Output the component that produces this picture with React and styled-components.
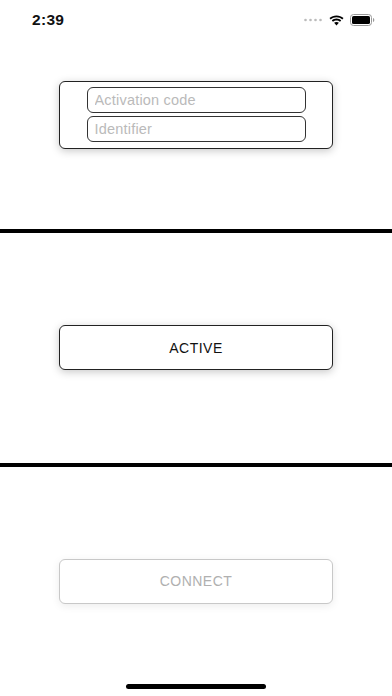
import React from 'react'
import { styled, createGlobalStyle } from 'styled-components'

const Global = createGlobalStyle`
  html, body {
    margin: 0;
    padding: 0;
    background: #fff;
    font-family: "Liberation Sans", Arial, sans-serif;
  }
  * { box-sizing: border-box; }
`

const Screen = styled.div`
  position: relative;
  width: 392px;
  height: 696px;
  display: flex;
  flex-direction: column;
  overflow: hidden;
  background: #fff;
`

const StatusBar = styled.div`
  position: absolute;
  top: 0;
  left: 0;
  right: 0;
  height: 40px;
  display: flex;
  align-items: center;
  justify-content: space-between;
  padding: 0 17px 0 32px;
`

const Time = styled.span`
  font-size: 15.5px;
  font-weight: 700;
  color: #111;
  letter-spacing: 0.3px;
`

const StatusIcons = styled.div`
  display: flex;
  align-items: center;
  gap: 6px;
`

const Section = styled.div`
  flex: 1;
  display: flex;
  align-items: center;
  justify-content: center;
`

const Divider = styled.div`
  height: 4px;
  background: #000;
  flex-shrink: 0;
`

const Card = styled.div`
  width: 274px;
  padding: 5px 0 6px;
  display: flex;
  flex-direction: column;
  align-items: center;
  gap: 3px;
  border: 1px solid #222;
  border-radius: 6px;
  background: #fff;
  box-shadow: 0 2px 8px rgba(0, 0, 0, 0.22);
`

const Field = styled.input`
  width: 219px;
  height: 26px;
  border: 1px solid #333;
  border-radius: 6px;
  padding: 0 7px;
  font-family: "Liberation Sans", Arial, sans-serif;
  font-size: 14.5px;
  letter-spacing: 0.2px;
  outline: none;
  background: #fff;

  &::placeholder {
    color: #bababa;
  }
`

const Button = styled.button`
  width: 274px;
  height: 45px;
  border-radius: 6px;
  border: 1px solid ${p => (p.$disabled ? '#c8c8c8' : '#222')};
  background: #fff;
  color: ${p => (p.$disabled ? '#b0b0b0' : '#111')};
  font-family: "Liberation Sans", Arial, sans-serif;
  font-size: 14px;
  letter-spacing: 0.5px;
  box-shadow: 0 2px 8px rgba(0, 0, 0, ${p => (p.$disabled ? 0.08 : 0.22)});
  cursor: pointer;
`

const HomeIndicator = styled.div`
  position: absolute;
  bottom: 7px;
  left: 50%;
  width: 140px;
  height: 5px;
  margin-left: -70px;
  border-radius: 3px;
  background: #000;
`

const Signal = () => (
  <svg width="20" height="4" viewBox="0 0 20 4">
    {[1, 6, 11, 16].map(x => (
      <circle key={x} cx={x + 1.5} cy="2" r="1.3" fill="#bbb" />
    ))}
  </svg>
)

const Wifi = () => (
  <svg width="15" height="11" viewBox="0 0 15 11">
    <path d="M7.5 2.2c2.2 0 4.2.8 5.8 2.2l1.2-1.3C12.6 1.4 10.2.4 7.5.4S2.4 1.4.5 3.1l1.2 1.3C3.3 3 5.3 2.2 7.5 2.2z" fill="#000" />
    <path d="M7.5 5.4c1.3 0 2.5.5 3.5 1.3l1.2-1.3C10.9 4.3 9.3 3.6 7.5 3.6S4.1 4.3 2.8 5.4L4 6.7c1-.8 2.2-1.3 3.5-1.3z" fill="#000" />
    <path d="M5.1 7.8l2.4 2.8 2.4-2.8c-.6-.6-1.5-.9-2.4-.9s-1.8.3-2.4.9z" fill="#000" />
  </svg>
)

const Battery = () => (
  <svg width="25" height="12" viewBox="0 0 25 12">
    <rect x="0.5" y="0.5" width="21" height="11" rx="3" fill="none" stroke="#999" />
    <rect x="2" y="2" width="18" height="8" rx="1.6" fill="#000" />
    <path d="M23 4v4c.8-.3 1.3-1.1 1.3-2S23.8 4.3 23 4z" fill="#999" />
  </svg>
)

export default function App() {
  return (
    <Screen>
      <Global />
      <StatusBar>
        <Time>2:39</Time>
        <StatusIcons>
          <Signal />
          <Wifi />
          <Battery />
        </StatusIcons>
      </StatusBar>

      <Section>
        <Card>
          <Field placeholder="Activation code" />
          <Field placeholder="Identifier" />
        </Card>
      </Section>
      <Divider />
      <Section>
        <Button>ACTIVE</Button>
      </Section>
      <Divider />
      <Section>
        <Button $disabled>CONNECT</Button>
      </Section>

      <HomeIndicator />
    </Screen>
  )
}
